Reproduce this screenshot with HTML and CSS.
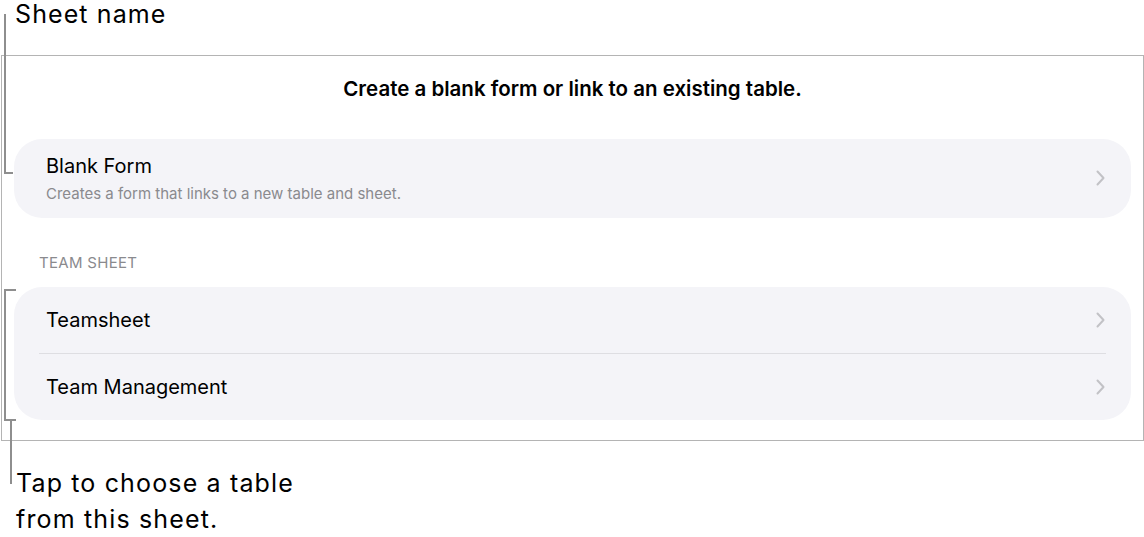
FILE: index.html
```html
<!DOCTYPE html>
<html lang="en">
<head>
<meta charset="utf-8">
<title>Form picker</title>
<link rel="stylesheet" href="styles.css">
</head>
<body>
<div class="page">
  <div class="callout-top">Sheet name</div>

  <div class="frame">
    <div class="title">Create a blank form or link to an existing table.</div>

    <div class="card card-blank">
      <div class="blank-text">
        <div class="row-title blank-title">Blank Form</div>
        <div class="row-sub">Creates a form that links to a new table and sheet.</div>
      </div>
      <svg class="chev" width="9" height="16" viewBox="0 0 9 16"><polyline points="1.5,1.5 7.5,8 1.5,14.5" fill="none" stroke="#c2c2c6" stroke-width="2" stroke-linecap="round" stroke-linejoin="round"/></svg>
    </div>

    <div class="section-header">TEAM SHEET</div>

    <div class="card card-list">
      <div class="row">
        <div class="row-title">Teamsheet</div>
        <svg class="chev" width="9" height="16" viewBox="0 0 9 16"><polyline points="1.5,1.5 7.5,8 1.5,14.5" fill="none" stroke="#c2c2c6" stroke-width="2" stroke-linecap="round" stroke-linejoin="round"/></svg>
      </div>
      <div class="divider"></div>
      <div class="row">
        <div class="row-title">Team Management</div>
        <svg class="chev" width="9" height="16" viewBox="0 0 9 16"><polyline points="1.5,1.5 7.5,8 1.5,14.5" fill="none" stroke="#c2c2c6" stroke-width="2" stroke-linecap="round" stroke-linejoin="round"/></svg>
      </div>
    </div>
  </div>

  <div class="callout-bottom">Tap to choose a table<br>from this sheet.</div>

  <div class="bracket-name"></div>
  <div class="bracket-sheet"></div>
  <div class="bracket-stem"></div>
</div>
</body>
</html>
```
FILE: styles.css
```css
* { box-sizing: border-box; }
html, body { margin: 0; padding: 0; background: #ffffff; }
body { font-family: Inter, "Noto Sans", sans-serif; color: #000; }

.page {
  position: relative;
  width: 1144px;
  height: 537px;
  overflow: hidden;
}

.callout-top {
  height: 55px;
  padding-left: 15px;
  font-size: 25px;
  line-height: 28px;
  letter-spacing: 1.1px;
  color: #000;
}

.frame {
  margin-left: 1px;
  width: 1143px;
  height: 386px;
  border: 1px solid #b4b4b4;
  padding: 19.5px 12px 0 12px;
}

.title {
  text-align: center;
  font-size: 20.5px;
  line-height: 25px;
  font-weight: 600;
  color: #000;
}

.card {
  background: #f4f4f8;
  border-radius: 28px;
}

.card-blank {
  margin-top: 38.5px;
  height: 79px;
  display: flex;
  align-items: flex-start;
  justify-content: space-between;
  padding: 15.5px 26px 0 32px;
}

.chev { display: block; flex: none; }
.card-blank .chev { margin-top: 15px; }

.row-title {
  font-size: 20px;
  line-height: 24px;
  color: #000;
}

.blank-title { line-height: 22px; }

.row-sub {
  margin-top: 8px;
  font-size: 15px;
  line-height: 18px;
  color: #8a8a8e;
}

.section-header {
  margin-top: 35.75px;
  padding-left: 25px;
  font-size: 15px;
  line-height: 18px;
  color: #8a8a8e;
  letter-spacing: 0.3px;
}

.card-list {
  margin-top: 15.25px;
}

.row {
  height: 66px;
  display: flex;
  align-items: center;
  justify-content: space-between;
  padding: 0 26px 0 32px;
}

.divider {
  height: 1px;
  margin: 0 25px;
  background: #dedee2;
}

.callout-bottom {
  margin-top: 24.2px;
  padding-left: 16px;
  font-size: 25px;
  line-height: 36px;
  letter-spacing: 1.15px;
  color: #000;
}

/* annotation brackets overlaying the screenshot */
.bracket-name {
  position: absolute;
  left: 4px;
  top: 14px;
  width: 9px;
  height: 160px;
  border-left: 2px solid #8e8e8e;
  border-bottom: 2px solid #8e8e8e;
}

.bracket-sheet {
  position: absolute;
  left: 4px;
  top: 289px;
  width: 12px;
  height: 132px;
  border: 2px solid #8e8e8e;
  border-right: none;
}

.bracket-stem {
  position: absolute;
  left: 10px;
  top: 421px;
  width: 2px;
  height: 63px;
  background: #8e8e8e;
}
```
